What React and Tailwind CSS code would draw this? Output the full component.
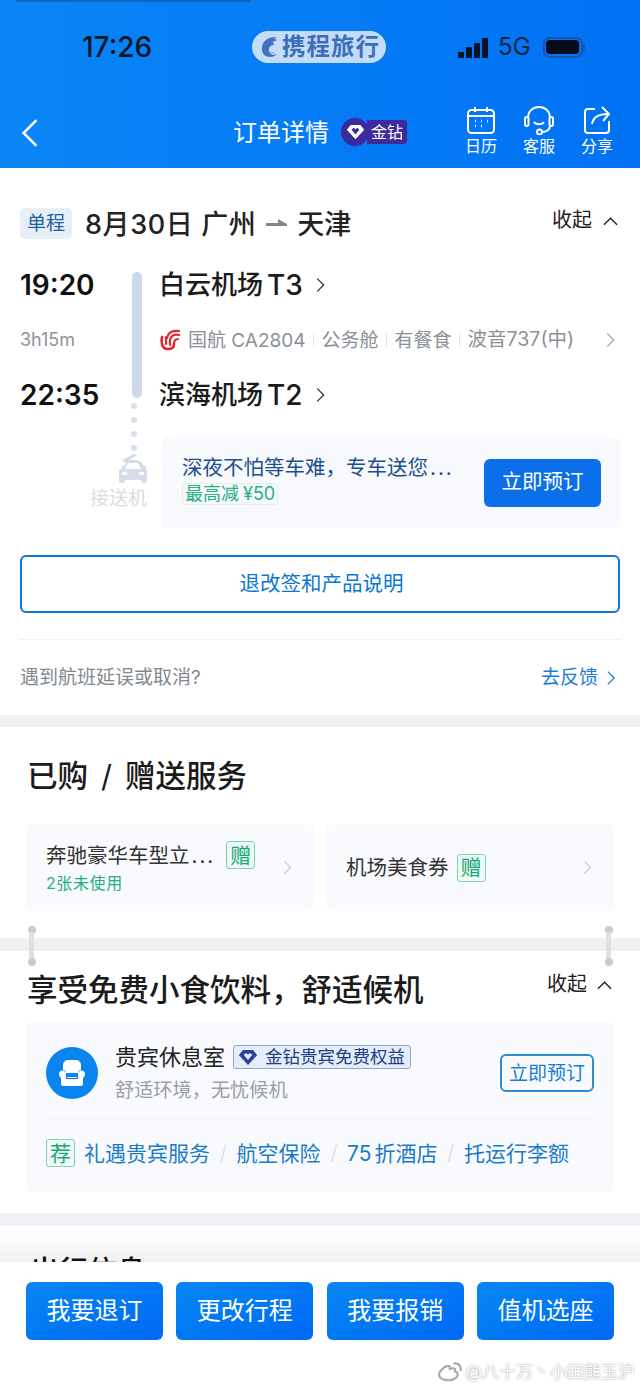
import React from 'react'
import { RiWeiboLine } from 'react-icons/ri'

const Chevron = ({ className = '', dir = 'right' }) => (
  <svg viewBox="0 0 12 20" fill="none" stroke="currentColor" strokeWidth="1.6" className={className}>
    {dir === 'right' ? <path d="M2 2l8 8-8 8" /> : <path d="M10 2l-8 8 8 8" />}
  </svg>
)

const ChevronUp = () => (
  <svg viewBox="0 0 16 10" fill="none" stroke="#222" strokeWidth="1.5" className="w-[15px] h-[10px]">
    <path d="M1 9l7-7 7 7" />
  </svg>
)

const Diamond = ({ fill = '#fff', cut = '#3b2ca0', className = '' }) => (
  <svg viewBox="0 0 24 20" className={className}>
    <path d="M6 1h12l5 6-11 12L1 7z" fill={fill} />
    <path d="M7 7l5 6 5-6-2.5-2.5L12 6.5 9.5 4.500z" fill={cut} />
  </svg>
)

const Gift = ({ className = '', children = '赠' }) => (
  <span className={`flex items-center justify-center w-[29px] h-[28px] rounded-[3px] border border-[#7fd0b4] bg-[#eef9f5] text-[#18a878] text-[21px] leading-none ${className}`}>
    {children}
  </span>
)

const Pipe = () => <span className="w-px h-[14px] bg-[#e2e4e8] mx-[7.500px]" />
const Slash = () => <span className="w-[26.500px] text-center text-[#dfe3e8] text-[20px] leading-none">/</span>

const Ellipsis = () => <span className="tracking-[2px] ml-[2px]">...</span>

const TopAction = ({ label, children }) => (
  <div className="w-[58px] flex flex-col items-center text-white">
    <div className="h-[31px] flex items-center justify-center">{children}</div>
    <span className="text-[16px] leading-[20px] mt-[1px]">{label}</span>
  </div>
)

const Header = () => (
  <header className="h-[168px] shrink-0 bg-gradient-to-r from-[#0a86f6] to-[#0271f4] flex flex-col">
    <div className="h-[2px] w-[235px] ml-[16px] bg-[#164a86] opacity-50 blur-[0.5px]" />
    <div className="h-[60px] mt-[15px] flex items-center relative">
      <span className="ml-[82px] text-[28px] font-medium text-[#0b1528] leading-none">17:26</span>
      <div className="ml-[100px] w-[134px] h-[32px] rounded-full bg-[#c3dcf8] flex items-center pl-[7px] gap-[3px]">
        <svg viewBox="0 0 20 22" className="w-[20px] h-[22px]">
          <path d="M17 1C10 1 4 4 3 11c-1 6 3 10 8 10 3 0 5-1 7-3-4 2-8 0-8-4 0-3 2-5 5-5l-1-3c1-1 3-1 4-2-1-1-2-1-3-1 1-1 2-1 2-2z" fill="#3f74bd" />
          <path d="M9 14c1 2 4 3 7 2-3 3-7 1-7-2z" fill="#7aa5d8" />
        </svg>
        <span className="text-[#3b6fb9] text-[23.500px] font-bold leading-none tracking-[1px] whitespace-nowrap">携程旅行</span>
      </div>
      <div className="ml-[72px] flex items-end gap-[2px] h-[21px]">
        <span className="w-[6px] h-[6px] bg-[#07142a] rounded-[1px]" />
        <span className="w-[6px] h-[11px] bg-[#07142a] rounded-[1px]" />
        <span className="w-[6px] h-[15px] bg-[#07142a] rounded-[1px]" />
        <span className="w-[6px] h-[20px] bg-[#07142a] rounded-[1px]" />
      </div>
      <span className="ml-[10px] text-[24px] text-[#0b2345] leading-none">5G</span>
      <div className="ml-[12px] flex items-center">
        <div className="w-[40px] h-[21px] rounded-[7px] border-2 border-[#1756a8] flex items-center justify-center">
          <div className="w-[33px] h-[14px] rounded-[4px] bg-[#050b18]" />
        </div>
        <div className="w-[2px] h-[7px] bg-[#1756a8] rounded-r" />
      </div>
    </div>
    <div className="mt-[41px] flex items-start relative">
      <Chevron dir="left" className="ml-[20px] mt-[-1px] w-[20px] h-[32px] text-white" />
      <span className="ml-[193px] text-[24px] text-white leading-[30px]">订单详情</span>
      <div className="ml-[12px] relative flex items-center h-[28px]">
        <div className="w-[28px] h-[28px] rounded-full bg-[#3a2a9e] flex items-center justify-center z-10">
          <Diamond className="w-[19px] h-[16px]" />
        </div>
        <div className="-ml-[2px] h-[24px] w-[40px] bg-[#3f2a9a] rounded-r-[3px] text-white text-[16px] flex items-center justify-center leading-none">金钻</div>
      </div>
      <div className="ml-[45px] flex items-start -mt-[14px]">
        <TopAction label="日历">
          <svg viewBox="0 0 28 28" fill="none" stroke="#fff" strokeWidth="2" className="w-[28px] h-[28px]">
            <rect x="1" y="4" width="26" height="23" rx="3.500" />
            <path d="M1 10h26M8 1v5M20 1v5" />
            <path d="M8 15h1M14 15h1M20 15h1M8 20h1M14 20h1" strokeWidth="2.400" />
          </svg>
        </TopAction>
        <TopAction label="客服">
          <svg viewBox="0 0 32 30" fill="none" stroke="#fff" strokeWidth="2" className="w-[32px] h-[30px]">
            <path d="M5 13C5 6 10 2 16 2s11 4 11 11" />
            <rect x="2" y="12" width="3.500" height="9" rx="1.700" />
            <rect x="26.500" y="12" width="3.500" height="9" rx="1.700" />
            <path d="M11 17c2 3 8 3 10 0" />
            <path d="M27 21c0 4-4 6-8 6" />
            <circle cx="16.500" cy="27" r="2.500" />
          </svg>
        </TopAction>
        <TopAction label="分享">
          <svg viewBox="0 0 28 28" fill="none" stroke="#fff" strokeWidth="2" className="w-[28px] h-[28px]">
            <path d="M12 3H5a3 3 0 0 0-3 3v18a3 3 0 0 0 3 3h18a3 3 0 0 0 3-3v-9" />
            <path d="M9 18c1-6 6-10 16-10" />
            <path d="M19 1l7 7-6 7" />
          </svg>
        </TopAction>
      </div>
    </div>
  </header>
)

const AirChina = () => (
  <svg viewBox="0 0 20 22" className="w-[20px] h-[22px]" fill="none" stroke="#e0282e" strokeLinecap="round">
    <path d="M19 2C12 1 8 4 7 9" strokeWidth="2.200" />
    <path d="M19 6c-5-1-8 1-9 5v5" strokeWidth="2.200" />
    <path d="M18 10c-3 0-4 2-4 5" strokeWidth="2.200" />
    <path d="M2 8c-1 6 0 12 6 12 4 0 6-2 6-5" strokeWidth="2.600" />
    <path d="M6 8v7" strokeWidth="2.200" />
  </svg>
)

const CarIcon = () => (
  <svg viewBox="0 0 32 32" className="w-[32px] h-[32px]" fill="#d4dde9">
    <path d="M5 13h2l3-4c1-1 2-2 4-2h6c2 0 3 1 4 2l3 4h2v3l1 1v11a2 2 0 0 1-2 2h-2a2 2 0 0 1-2-2v-1H8v1a2 2 0 0 1-2 2H4a2 2 0 0 1-2-2V17l3-1z" />
    <path d="M8 16h16l-3-6H11z" fill="#fff" />
    <rect x="5" y="19" width="5" height="3" fill="#fff" />
    <rect x="22" y="19" width="5" height="3" fill="#fff" />
    <path d="M5 7l12-6 3 1L9 10z" />
  </svg>
)

const SofaIcon = () => (
  <svg viewBox="0 0 32 32" className="w-[32px] h-[32px]">
    <path d="M7 13V8a5 5 0 0 1 5-5h8a5 5 0 0 1 5 5v5c-2 0-3 1-3 3H10c0-2-1-3-3-3z" fill="#fff" />
    <path d="M3 17a3.500 3.500 0 0 1 7 0v3h12v-3a3.500 3.500 0 0 1 7 0c0 2-1 3-2 4v6a2 2 0 0 1-2 2H7a2 2 0 0 1-2-2v-6c-1-1-2-2-2-4z" fill="#fff" />
    <rect x="10.500" y="17.500" width="11" height="4" fill="none" stroke="#0a84f0" strokeWidth="1.200" />
  </svg>
)

const FlightCard = () => (
  <section className="h-[547px] shrink-0 bg-white px-[20px] flex flex-col">
    <div className="mt-[39px] h-[32px] flex items-center">
      <span className="w-[52px] h-[31px] rounded-[5px] bg-[#e8eef6] text-[#20619f] text-[19px] leading-none flex items-center justify-center">单程</span>
      <span className="ml-[13px] text-[27px] text-[#222] font-medium tracking-[0.6px] leading-none whitespace-nowrap mt-[2px]">8月30日 广州</span>
      <span className="ml-[10px] w-[21px] h-[10px] flex items-end">
        <svg viewBox="0 0 21 10" className="w-[21px] h-[10px]"><path d="M0 5h12V1l9 5v2H0z" fill="#7d8791" /></svg>
      </span>
      <span className="ml-[10px] text-[27px] text-[#222] font-medium leading-none mt-[2px]">天津</span>
      <span className="ml-auto text-[20px] text-[#222] leading-none -mt-[6px]">收起</span>
      <span className="ml-[11px] mr-[2px] -mt-[5px] flex"><ChevronUp /></span>
    </div>

    <div className="relative mt-[29px]">
      <div className="absolute left-[112px] top-[4px] w-[10px] h-[126px] rounded-full bg-[#cdd9ea]" />
      <div className="absolute left-[109px] top-[135px] flex flex-col gap-[8px]">
        {[0, 1, 2, 3].map(i => <span key={i} className="block w-[6px] h-[6px] rounded-full bg-[#d5dfec] ml-[2px]" />)}
      </div>
      <div className="flex items-center h-[34px]">
        <span className="w-[139px] text-[28px] font-semibold text-[#111] leading-none">19:20</span>
        <span className="text-[26px] font-medium text-[#1b1b1b] leading-none whitespace-nowrap">白云机场</span>
        <span className="ml-[4px] text-[28px] font-medium text-[#1b1b1b] leading-none">T3</span>
        <Chevron className="ml-[12px] w-[11px] h-[16px] text-[#333]" />
      </div>
      <div className="flex items-center h-[34px] mt-[21px]">
        <span className="w-[140px] text-[18px] text-[#8d939b] leading-none">3h15m</span>
        <AirChina />
        <span className="ml-[8px] text-[19px] text-[#8b9099] leading-none whitespace-nowrap">国航 CA2804</span>
        <Pipe />
        <span className="text-[19px] text-[#8b9099] leading-none">公务舱</span>
        <Pipe />
        <span className="text-[19px] text-[#8b9099] leading-none">有餐食</span>
        <Pipe />
        <span className="text-[19.500px] text-[#8b9099] leading-none whitespace-nowrap">波音737(中)</span>
        <Chevron className="ml-auto mr-[4px] w-[11px] h-[16px] text-[#9aa0a8]" />
      </div>
      <div className="flex items-center h-[34px] mt-[21px]">
        <span className="w-[139px] text-[28px] font-semibold text-[#111] leading-none">22:35</span>
        <span className="text-[26px] font-medium text-[#1b1b1b] leading-none whitespace-nowrap">滨海机场</span>
        <span className="ml-[4px] text-[28px] font-medium text-[#1b1b1b] leading-none">T2</span>
        <Chevron className="ml-[12px] w-[11px] h-[16px] text-[#333]" />
      </div>

      <div className="flex mt-[25px] h-[91px]">
        <div className="w-[142px] flex flex-col items-end pr-[15px]">
          <div className="mt-[16px] -mr-[2px]"><CarIcon /></div>
          <span className="mt-[2px] text-[19px] text-[#d8dde4] leading-[24px]">接送机</span>
        </div>
        <div className="flex-1 rounded-[6px] bg-[#f7f9fc] flex items-center pl-[20px] pr-[19px]">
          <div className="flex flex-col items-start -mt-[4px]">
            <span className="text-[20.500px] text-[#1c4f8c] leading-[24px] whitespace-nowrap">深夜不怕等车难{'\uFF0C'}专车送您<Ellipsis /></span>
            <span className="mt-[3px] h-[22px] px-[2px] rounded-[3px] border border-[#e4efeb] text-[#25b07f] text-[18px] leading-[20px] whitespace-nowrap">最高减<span className="ml-[4px]">¥50</span></span>
          </div>
          <button className="ml-auto w-[117px] h-[48px] rounded-[6px] bg-[#0a6fe8] text-white text-[20.500px] leading-none">立即预订</button>
        </div>
      </div>
    </div>

    <button className="mt-[27px] pl-[3px] h-[58px] shrink-0 rounded-[6px] border-2 border-[#0d76d8] text-[#0a76d6] text-[20.500px] leading-none">退改签和产品说明</button>
    <div className="mt-[26px] h-px bg-[#f0f1f3]" />
    <div className="h-[75px] flex items-center">
      <span className="text-[19px] text-[#83888f] leading-none">遇到航班延误或取消?</span>
      <span className="ml-auto text-[19px] text-[#1a7cd8] leading-none">去反馈</span>
      <Chevron className="ml-[8px] mr-[4px] w-[10px] h-[16px] text-[#1a7cd8]" />
    </div>
  </section>
)

const Band = () => <div className="h-[12px] shrink-0 bg-[#eff1f4]" />

const Purchased = () => (
  <section className="h-[211px] shrink-0 bg-white px-[26px] flex flex-col">
    <h2 className="mt-[31px] ml-px text-[30.500px] font-medium text-[#1b1b1b] leading-[36px] whitespace-nowrap flex items-center">
      <span>已购</span>
      <span className="ml-[13px] mr-[13px] font-normal">/</span>
      <span>赠送服务</span>
    </h2>
    <div className="mt-[30px] flex gap-[12px]">
      <div className="flex-1 h-[87px] rounded-[6px] bg-[#f8fafd] flex items-center pl-[20px] pr-[22px]">
        <div className="flex flex-col">
          <div className="flex items-center h-[28px]">
            <span className="text-[20.500px] text-[#333] leading-none whitespace-nowrap mt-[2px]">奔驰豪华车型立<Ellipsis /></span>
            <Gift className="ml-[11px]" />
          </div>
          <span className="mt-[3px] text-[16px] text-[#25ad80] leading-[22px] tracking-[0.6px]">2张未使用</span>
        </div>
        <Chevron className="ml-auto w-[9px] h-[15px] text-[#c6cad0]" />
      </div>
      <div className="flex-1 h-[87px] rounded-[6px] bg-[#f8fafd] flex items-center pl-[20px] pr-[22px]">
        <span className="text-[20.500px] text-[#333] leading-none mt-[1px]">机场美食券</span>
        <Gift className="ml-[8px]" />
        <Chevron className="ml-auto w-[9px] h-[15px] text-[#c6cad0]" />
      </div>
    </div>
  </section>
)

const Lounge = () => (
  <section className="h-[262px] shrink-0 bg-white px-[26px] flex flex-col">
    <div className="mt-[20px] h-[38px] flex items-center">
      <h2 className="ml-px text-[30.500px] font-medium text-[#1b1b1b] leading-[38px] whitespace-nowrap">享受免费小食饮料{'\uFF0C'}舒适候机</h2>
      <span className="ml-auto text-[20px] text-[#222] leading-none -mt-[12px]">收起</span>
      <span className="ml-[10px] mr-[2px] -mt-[11px] flex"><ChevronUp /></span>
    </div>
    <div className="mt-[13px] h-[170px] rounded-[6px] bg-[#f8fafd] px-[20px] flex flex-col">
      <div className="h-[96px] pt-[6px] flex items-center">
        <div className="w-[52px] h-[52px] rounded-full bg-[#0a84f0] flex items-center justify-center">
          <SofaIcon />
        </div>
        <div className="ml-[17px] flex flex-col">
          <div className="flex items-center h-[26px]">
            <span className="text-[22px] text-[#222] leading-none">贵宾休息室</span>
            <div className="ml-[8px] w-[178px] h-[24px] rounded-[3px] border border-[#8fa6d3] bg-[#e6edfa] flex items-center pl-[4px]">
              <Diamond fill="#2d3fa0" cut="#e6edfa" className="w-[20px] h-[17px]" />
              <span className="ml-[7px] text-[17.500px] text-[#223f80] leading-none whitespace-nowrap">金钻贵宾免费权益</span>
            </div>
          </div>
          <span className="mt-[8px] text-[19.200px] text-[#9a9ea5] leading-[24px] whitespace-nowrap">舒适环境{'\uFF0C'}无忧候机</span>
        </div>
        <button className="ml-auto w-[94px] h-[38px] rounded-[6px] border-2 border-[#2a8bd8] text-[#1a7cd8] text-[19px] leading-none whitespace-nowrap">立即预订</button>
      </div>
      <div className="h-px bg-[#eef0f4]" />
      <div className="h-[68px] flex items-center">
        <Gift className="text-[20px]">荐</Gift>
        <span className="ml-[9px] text-[#1a7cc8] text-[21px] leading-none whitespace-nowrap">礼遇贵宾服务</span>
        <Slash />
        <span className="text-[#1a7cc8] text-[21px] leading-none whitespace-nowrap">航空保险</span>
        <Slash />
        <span className="text-[#1a7cc8] text-[21px] leading-none whitespace-nowrap">75<span className="ml-[3px]">折酒店</span></span>
        <Slash />
        <span className="text-[#1a7cc8] text-[21px] leading-none whitespace-nowrap">托运行李额</span>
      </div>
    </div>
  </section>
)

const TravelPeek = () => (
  <section className="h-[36px] shrink-0 overflow-hidden bg-gradient-to-b from-white to-[#f1f1f1] pl-[30px]">
    <h2 className="pt-[28px] text-[29px] font-medium text-[#111] leading-[36px]">出行信息</h2>
  </section>
)

const BottomBar = () => (
  <footer className="h-[126px] shrink-0 bg-white px-[26px] pt-[20px] relative">
    <div className="flex justify-between">
      {['我要退订', '更改行程', '我要报销', '值机选座'].map(label => (
        <button key={label} className="w-[137px] h-[58px] rounded-[6px] bg-gradient-to-br from-[#0a87f2] to-[#0268f6] text-white text-[24px] leading-none">
          {label}
        </button>
      ))}
    </div>
    <div className="absolute right-[5px] bottom-[3px] flex items-center text-white [text-shadow:0_0_2px_#8a8a8a]">
      <RiWeiboLine className="w-[26px] h-[26px] text-[#a8a8a8]" />
      <span className="ml-[3px] text-[17px] leading-none whitespace-nowrap">@八十万丶小田熊玉沪</span>
    </div>
  </footer>
)

const Handle = ({ className }) => (
  <div className={`absolute top-[926px] w-[9px] h-[40px] flex flex-col items-center ${className}`}>
    <span className="w-[8px] h-[8px] rounded-full bg-[#c9cbce]" />
    <span className="w-[5px] flex-1 -my-[2px] bg-[#dfe0e3]" />
    <span className="w-[8px] h-[8px] rounded-full bg-[#c9cbce]" />
  </div>
)

export default function App() {
  return (
    <div className="relative w-[640px] h-[1388px] overflow-hidden flex flex-col bg-white font-['Inter','Noto_Sans_CJK_SC',sans-serif]">
      <Header />
      <FlightCard />
      <Band />
      <Purchased />
      <div className="h-[13px] shrink-0 bg-[#eff1f4]" />
      <Lounge />
      <div className="h-[13px] shrink-0 bg-[#eff1f4]" />
      <TravelPeek />
      <BottomBar />
      <Handle className="left-[27px]" />
      <Handle className="left-[604px]" />
    </div>
  )
}
